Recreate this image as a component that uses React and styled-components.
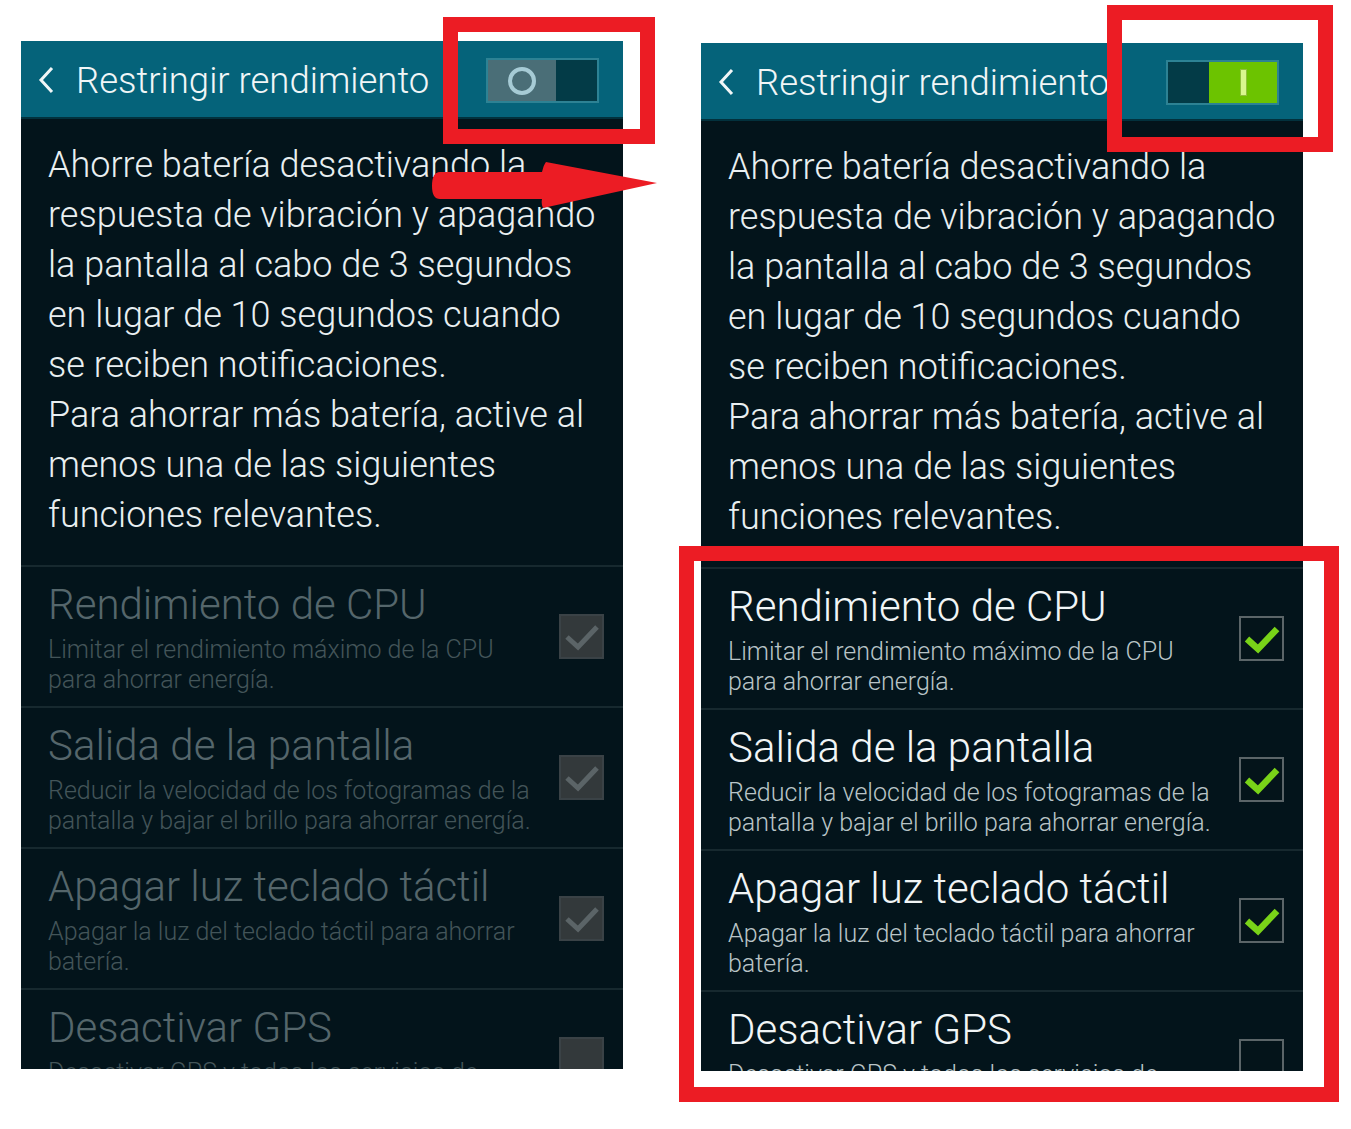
import React from "react";
import styled, { createGlobalStyle } from "styled-components";

const GlobalStyle = createGlobalStyle`
    html, body {
        margin: 0;
        padding: 0;
        background: #ffffff;
    }
    body {
        font-family: Roboto, "Noto Sans", "Liberation Sans", sans-serif;
    }
`;

const Page = styled.div`
    position: relative;
    width: 1351px;
    height: 1129px;
    display: flex;
    align-items: flex-start;
    gap: 78px;
    padding-left: 21px;
    box-sizing: border-box;
    overflow: hidden;
    background: #ffffff;
`;

const Phone = styled.div`
    width: 602px;
    height: 1028px;
    margin-top: ${({ $top }) => $top}px;
    background: #03141b;
    overflow: hidden;
    flex-shrink: 0;
`;

const Header = styled.div`
    height: 76px;
    display: flex;
    align-items: center;
    padding-left: 16px;
    background: #05637a;
    border-bottom: 2px solid #02313d;
`;

const Back = styled.svg`
    width: 20px;
    height: 30px;
    margin-right: 19px;
    margin-top: 2px;
    flex-shrink: 0;
`;

const HeaderTitle = styled.div`
    font-size: 36.5px;
    font-weight: 300;
    color: #f1f6f7;
    white-space: nowrap;
    margin-top: 3px;
`;

const Toggle = styled.div`
    margin-left: auto;
    margin-right: 24px;
    margin-top: 3px;
    width: 113px;
    height: 45px;
    box-sizing: border-box;
    border: 2px solid #2d8294;
    display: flex;
    background: #033b47;
    flex-shrink: 0;
    position: relative;
    z-index: 1;
`;

const Knob = styled.div`
    width: 68px;
    height: 100%;
    display: flex;
    align-items: center;
    justify-content: center;
    margin-left: ${({ $on }) => ($on ? "auto" : "0")};
    background: ${({ $on }) => ($on ? "#6cc300" : "#4a6e77")};
`;

const Ring = styled.div`
    width: 20px;
    height: 20px;
    border-radius: 50%;
    border: 4px solid #a6cbd5;
`;

const Bar = styled.div`
    width: 5px;
    height: 25px;
    background: #d8f78f;
    border: 1px solid #8fbf3c;
`;

const Description = styled.div`
    padding: 21px 27px 25px 27px;
    font-size: 36px;
    font-weight: 300;
    line-height: 50px;
    color: #e9eff1;
`;

const Line = styled.div`
    white-space: nowrap;
`;

const Row = styled.div`
    display: flex;
    align-items: center;
    height: 141px;
    box-sizing: border-box;
    padding: 0 19px 0 27px;
    border-top: 2px solid #17292f;
`;

const RowText = styled.div`
    flex: 1;
    align-self: flex-start;
    padding-top: 14px;
`;

const RowTitle = styled.div`
    font-size: 42px;
    font-weight: 300;
    line-height: 48px;
    white-space: nowrap;
    color: ${({ $dim }) => ($dim ? "#55666b" : "#f1f5f6")};
`;

const RowDescBlock = styled.div`
    margin-top: 6px;
`;

const RowDesc = styled.div`
    font-size: 25px;
    font-weight: 300;
    line-height: 30px;
    white-space: nowrap;
    color: ${({ $dim }) => ($dim ? "#435559" : "#b9c4c7")};
`;

const Box = styled.div`
    width: 45px;
    height: 45px;
    box-sizing: border-box;
    flex-shrink: 0;
    display: flex;
    align-items: center;
    justify-content: center;
    background: ${({ $dim }) => ($dim ? "#33393b" : "#04141a")};
    border: 2px solid ${({ $dim }) => ($dim ? "#3a4246" : "#5b6568")};
`;

const Mark = styled.svg`
    width: 38px;
    height: 38px;
`;

const RedBox = styled.div`
    position: absolute;
    left: ${({ $x }) => $x}px;
    top: ${({ $y }) => $y}px;
    width: ${({ $w }) => $w}px;
    height: ${({ $h }) => $h}px;
    box-sizing: border-box;
    border: ${({ $t }) => $t}px solid #ec1c24;
    pointer-events: none;
    z-index: 2;
`;

const Arrow = styled.svg`
    position: absolute;
    left: 428px;
    top: 158px;
    width: 234px;
    height: 54px;
    z-index: 2;
`;

const description = [
    "Ahorre batería desactivando la",
    "respuesta de vibración y apagando",
    "la pantalla al cabo de 3 segundos",
    "en lugar de 10 segundos cuando",
    "se reciben notificaciones.",
    "Para ahorrar más batería, active al",
    "menos una de las siguientes",
    "funciones relevantes.",
];

const options = [
    {
        title: "Rendimiento de CPU",
        desc: ["Limitar el rendimiento máximo de la CPU", "para ahorrar energía."],
        checked: true,
    },
    {
        title: "Salida de la pantalla",
        desc: ["Reducir la velocidad de los fotogramas de la", "pantalla y bajar el brillo para ahorrar energía."],
        checked: true,
    },
    {
        title: "Apagar luz teclado táctil",
        desc: ["Apagar la luz del teclado táctil para ahorrar", "batería."],
        checked: true,
    },
    {
        title: "Desactivar GPS",
        desc: ["Desactivar GPS y todos los servicios de", "ubicación."],
        checked: false,
    },
];

const Checkbox = ({ dim, checked }) => (
    <Box $dim={dim}>
        {checked && (
            <Mark viewBox="0 0 38 38">
                <path
                    d="M4 19 L15 29 L34 9"
                    fill="none"
                    stroke={dim ? "#5b6467" : "#79d318"}
                    strokeWidth={dim ? 5 : 6.5}
                    strokeLinejoin="miter"
                />
            </Mark>
        )}
    </Box>
);

const Screen = ({ on, top }) => (
    <Phone $top={top}>
        <Header>
            <Back viewBox="0 0 20 30">
                <path d="M15 3 L4 15 L15 27" fill="none" stroke="#f1f6f7" strokeWidth="3" />
            </Back>
            <HeaderTitle>Restringir rendimiento</HeaderTitle>
            <Toggle>
                <Knob $on={on}>{on ? <Bar /> : <Ring />}</Knob>
            </Toggle>
        </Header>
        <Description>
            {description.map((line) => (
                <Line key={line}>{line}</Line>
            ))}
        </Description>
        {options.map((opt) => (
            <Row key={opt.title}>
                <RowText>
                    <RowTitle $dim={!on}>{opt.title}</RowTitle>
                    <RowDescBlock>
                        {opt.desc.map((d) => (
                            <RowDesc key={d} $dim={!on}>{d}</RowDesc>
                        ))}
                    </RowDescBlock>
                </RowText>
                <Checkbox dim={!on} checked={opt.checked} />
            </Row>
        ))}
    </Phone>
);

const App = () => {
    return (
        <>
            <GlobalStyle />
            <Page>
                <Screen on={false} top={41} />
                <Screen on={true} top={43} />

                <RedBox $x={443} $y={17} $w={212} $h={127} $t={15} />
                <RedBox $x={1107} $y={5} $w={226} $h={147} $t={15} />
                <RedBox $x={679} $y={546} $w={660} $h={556} $t={15} />

                <Arrow viewBox="0 0 234 54">
                    <path
                        d="M12 14 L114 14 Q116 6 118 4 L229 25 L115 50 Q113 46 114 41 L12 41 Q4 41 4 28 Q4 14 12 14 Z"
                        fill="#ec1c24"
                    />
                </Arrow>
            </Page>
        </>
    );
};

export default App;
